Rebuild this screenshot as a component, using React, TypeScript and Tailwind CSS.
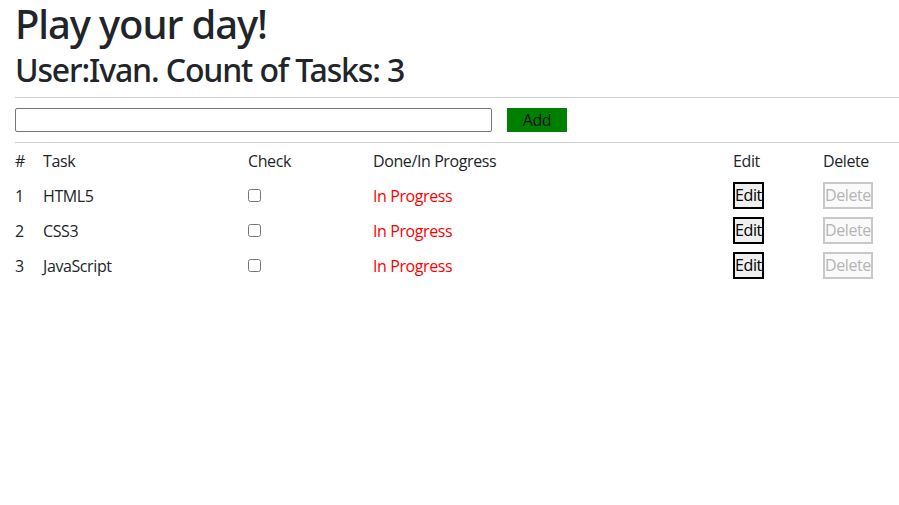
const TASKS = [
  { id: 1, title: 'HTML5' },
  { id: 2, title: 'CSS3' },
  { id: 3, title: 'JavaScript' },
]

const COLS = 'grid grid-cols-[28px_205px_125px_360px_90px_1fr]'

export default function App() {
  return (
    <div className="min-h-[505px] bg-white pl-[15px] text-[#212529] font-['Open_Sans','Noto_Sans',sans-serif] tracking-[-0.4px]">
      <h1 className="h-[48px] text-[40px] leading-[48px] font-medium tracking-[-1.1px] font-['Noto_Sans',sans-serif]">Play your day!</h1>
      <h2 className="mt-[3px] h-[38px] text-[32px] leading-[38px] font-medium tracking-[-1.15px] font-['Noto_Sans',sans-serif]">User:Ivan. Count of Tasks: 3</h2>

      <hr className="mt-[8px] border-t border-[#cfcfcf]" />

      <div className="flex items-center gap-[15px] py-[10px]">
        <input
          type="text"
          className="h-[24px] w-[477px] rounded-[2px] border border-[#767676] px-1"
        />
        <button
          type="button"
          className="h-[24px] w-[60px] bg-[#008000] text-[16px] leading-[24px] text-[#111]"
        >
          Add
        </button>
      </div>

      <hr className="border-t border-[#cfcfcf]" />

      {/* Task table */}
      <div className="text-[16px]">
        <div className={`${COLS} h-[35px] items-center pt-[1px]`}>
          <span>#</span>
          <span>Task</span>
          <span>Check</span>
          <span>Done/In Progress</span>
          <span>Edit</span>
          <span>Delete</span>
        </div>
        {TASKS.map((t) => (
          <div key={t.id} className={`${COLS} h-[35px] items-center`}>
            <span>{t.id}</span>
            <span>{t.title}</span>
            <span className="flex">
              <input type="checkbox" className="m-0 h-[13px] w-[13px]" />
            </span>
            <span className="text-[#ff0000]">In Progress</span>
            <span className="flex">
              <button
                type="button"
                className="h-[27px] w-[31px] border-2 border-black bg-[#efefef] p-0 text-[16px] leading-[23px] text-black"
              >
                Edit
              </button>
            </span>
            <span className="flex">
              <button
                type="button"
                disabled
                className="h-[27px] w-[50px] border-2 border-[#c8c8c8] bg-[#fafafa] p-0 text-[16px] leading-[23px] text-[#b4b4b4]"
              >
                Delete
              </button>
            </span>
          </div>
        ))}
      </div>
    </div>
  )
}
